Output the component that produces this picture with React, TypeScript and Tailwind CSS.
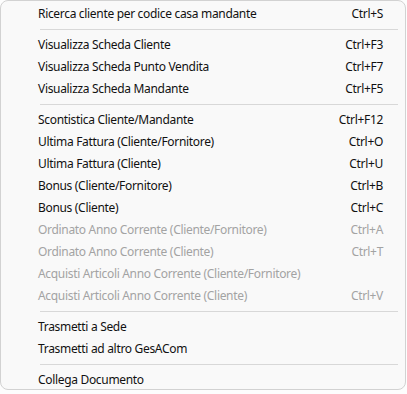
import React from 'react';

type Item = { label: string; shortcut?: string; disabled?: boolean } | 'sep';

const items: Item[] = [
  { label: 'Ricerca cliente per codice casa mandante', shortcut: 'Ctrl+S' },
  'sep',
  { label: 'Visualizza Scheda Cliente', shortcut: 'Ctrl+F3' },
  { label: 'Visualizza Scheda Punto Vendita', shortcut: 'Ctrl+F7' },
  { label: 'Visualizza Scheda Mandante', shortcut: 'Ctrl+F5' },
  'sep',
  { label: 'Scontistica Cliente/Mandante', shortcut: 'Ctrl+F12' },
  { label: 'Ultima Fattura (Cliente/Fornitore)', shortcut: 'Ctrl+O' },
  { label: 'Ultima Fattura (Cliente)', shortcut: 'Ctrl+U' },
  { label: 'Bonus (Cliente/Fornitore)', shortcut: 'Ctrl+B' },
  { label: 'Bonus (Cliente)', shortcut: 'Ctrl+C' },
  { label: 'Ordinato Anno Corrente (Cliente/Fornitore)', shortcut: 'Ctrl+A', disabled: true },
  { label: 'Ordinato Anno Corrente (Cliente)', shortcut: 'Ctrl+T', disabled: true },
  { label: 'Acquisti Articoli Anno Corrente (Cliente/Fornitore)', disabled: true },
  { label: 'Acquisti Articoli Anno Corrente (Cliente)', shortcut: 'Ctrl+V', disabled: true },
  'sep',
  { label: 'Trasmetti a Sede' },
  { label: 'Trasmetti ad altro GesACom' },
  'sep',
  { label: 'Collega Documento' },
];

export default function App() {
  return (
    <div
      className="w-[407px] h-[394px] bg-[#fdfdfd] overflow-hidden"
      style={{ fontFamily: '"Segoe UI", "Noto Sans", "Open Sans", sans-serif' }}
    >
      <div className="w-[406px] h-[390px] rounded-[8px] border border-[#d2d2d2] bg-[#f9f9f9] pt-[2px] overflow-hidden">
        {items.map((it, i) =>
          it === 'sep' ? (
            <div key={i} className="h-[9px] flex items-center pl-[39px] pr-[7px]">
              <div className="h-px w-full bg-[#d8d8d8]" />
            </div>
          ) : (
            <div
              key={i}
              className={`h-[22px] flex items-center justify-between pl-[37px] pr-[22px] text-[12px] tracking-[-0.32px] ${
                it.disabled ? 'text-[#a3a3a3]' : 'text-[#111]'
              }`}
            >
              <span>{it.label}</span>
              {it.shortcut && <span>{it.shortcut}</span>}
            </div>
          )
        )}
      </div>
    </div>
  );
}
